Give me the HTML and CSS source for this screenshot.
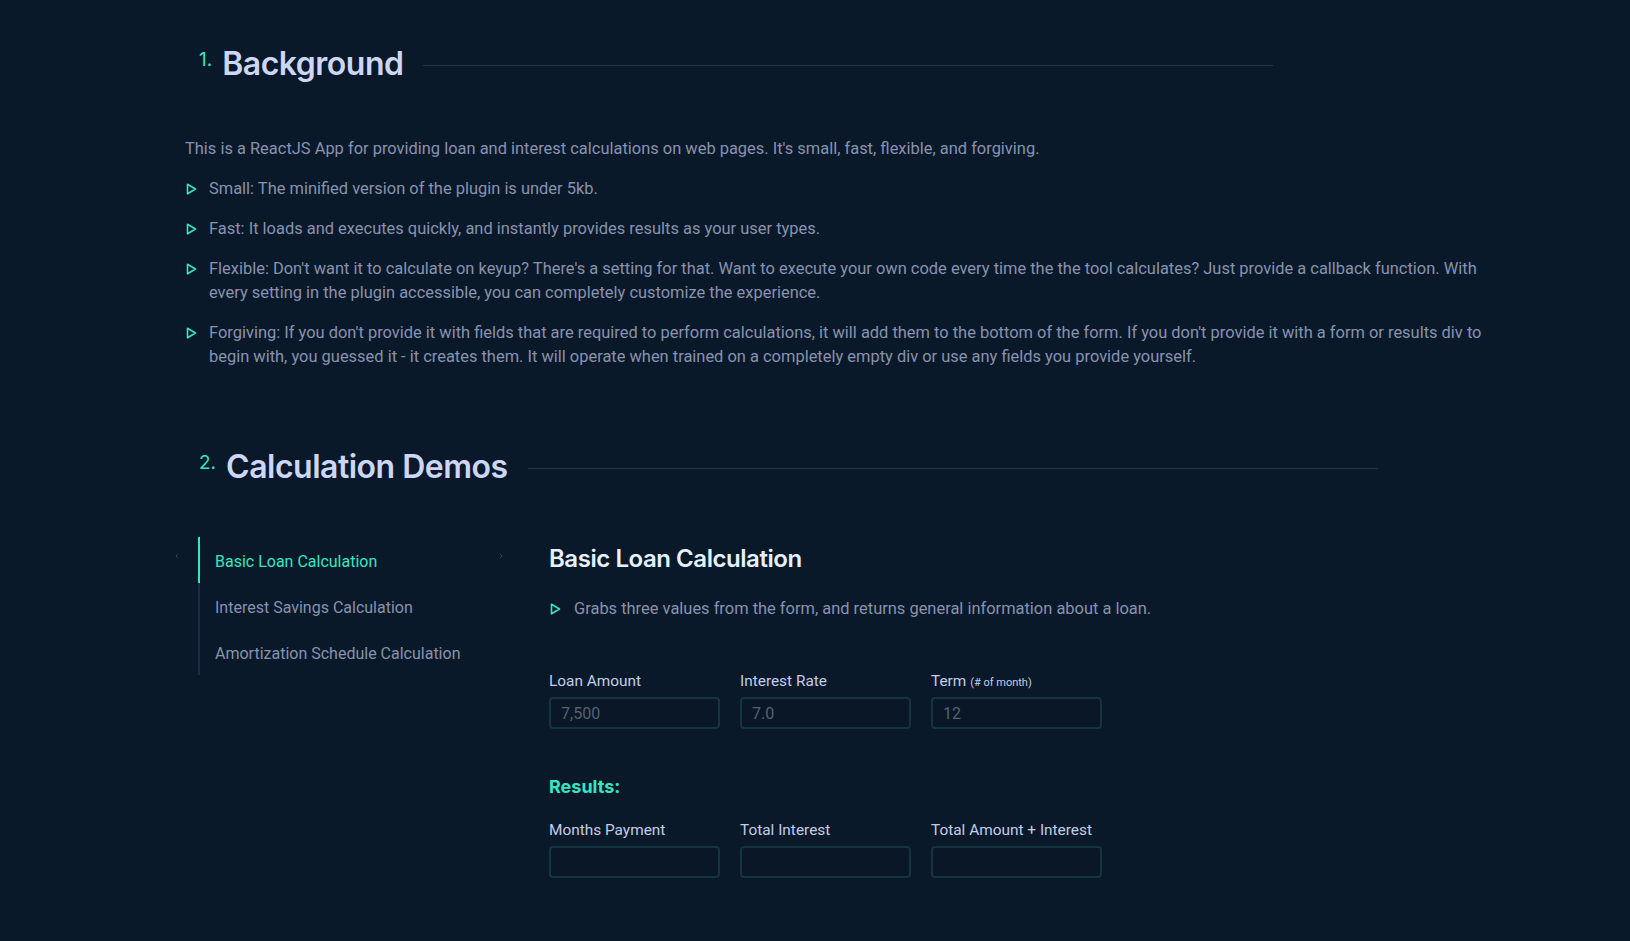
FILE: index.html
```html
<!DOCTYPE html>
<html lang="en">
<head>
<meta charset="utf-8">
<title>Loan Calculator</title>
<link rel="stylesheet" href="styles.css">
</head>
<body>
<main class="page">
  <section class="section">
    <h2 class="numbered-heading"><span class="num">1.</span><span class="title">Background</span></h2>
    <div class="about">
      <p class="lead">This is a ReactJS App for providing loan and interest calculations on web pages. It's small, fast, flexible, and forgiving.</p>
      <ul class="tri-list">
        <li><svg class="tri" width="11" height="12" viewBox="0 0 11 12"><path d="M1.5 1.2 L9.5 6 L1.5 10.8 Z" fill="none" stroke="currentColor" stroke-width="1.6" stroke-linejoin="round"/></svg><span>Small: The minified version of the plugin is under 5kb.</span></li>
        <li><svg class="tri" width="11" height="12" viewBox="0 0 11 12"><path d="M1.5 1.2 L9.5 6 L1.5 10.8 Z" fill="none" stroke="currentColor" stroke-width="1.6" stroke-linejoin="round"/></svg><span>Fast: It loads and executes quickly, and instantly provides results as your user types.</span></li>
        <li><svg class="tri" width="11" height="12" viewBox="0 0 11 12"><path d="M1.5 1.2 L9.5 6 L1.5 10.8 Z" fill="none" stroke="currentColor" stroke-width="1.6" stroke-linejoin="round"/></svg><span>Flexible: Don't want it to calculate on keyup? There's a setting for that. Want to execute your own code every time the the tool calculates? Just provide a callback function. With every setting in the plugin accessible, you can completely customize the experience.</span></li>
        <li><svg class="tri" width="11" height="12" viewBox="0 0 11 12"><path d="M1.5 1.2 L9.5 6 L1.5 10.8 Z" fill="none" stroke="currentColor" stroke-width="1.6" stroke-linejoin="round"/></svg><span>Forgiving: If you don't provide it with fields that are required to perform calculations, it will add them to the bottom of the form. If you don't provide it with a form or results div to begin with, you guessed it - it creates them. It will operate when trained on a completely empty div or use any fields you provide yourself.</span></li>
      </ul>
    </div>
  </section>

  <section class="section section-demos">
    <h2 class="numbered-heading"><span class="num">2.</span><span class="title">Calculation Demos</span></h2>
    <div class="demos">
      <div class="tabs-wrap">
        <span class="scroll-btn"><svg width="4" height="6" viewBox="0 0 4 6"><path d="M3 0.8 L1 3 L3 5.2" fill="none" stroke="currentColor" stroke-width="1"/></svg></span>
        <div class="tab-list">
          <div class="tab active">Basic Loan Calculation</div>
          <div class="tab">Interest Savings Calculation</div>
          <div class="tab">Amortization Schedule Calculation</div>
        </div>
        <span class="scroll-btn"><svg width="4" height="6" viewBox="0 0 4 6"><path d="M1 0.8 L3 3 L1 5.2" fill="none" stroke="currentColor" stroke-width="1"/></svg></span>
      </div>
      <div class="panel">
        <h3 class="panel-title">Basic Loan Calculation</h3>
        <ul class="tri-list panel-list">
          <li><svg class="tri" width="11" height="12" viewBox="0 0 11 12"><path d="M1.5 1.2 L9.5 6 L1.5 10.8 Z" fill="none" stroke="currentColor" stroke-width="1.6" stroke-linejoin="round"/></svg><span>Grabs three values from the form, and returns general information about a loan.</span></li>
        </ul>
        <form class="calc-form">
          <div class="field-row">
            <label class="field"><span class="label">Loan Amount</span><input class="input" type="text" placeholder="7,500"></label>
            <label class="field"><span class="label">Interest Rate</span><input class="input" type="text" placeholder="7.0"></label>
            <label class="field"><span class="label">Term <small class="hint">(# of month)</small></span><input class="input" type="text" placeholder="12"></label>
          </div>
          <h4 class="results-title">Results:</h4>
          <div class="field-row">
            <label class="field"><span class="label">Months Payment</span><input class="input" type="text"></label>
            <label class="field"><span class="label">Total Interest</span><input class="input" type="text"></label>
            <label class="field"><span class="label">Total Amount + Interest</span><input class="input" type="text"></label>
          </div>
        </form>
      </div>
    </div>
  </section>
</main>
</body>
</html>
```

FILE: styles.css
```css
* { box-sizing: border-box; }

html, body {
  margin: 0;
  padding: 0;
  background: #0a1929;
}

body {
  font-family: Roboto, "Noto Sans", sans-serif;
  color: #8892b0;
  font-size: 16.45px;
  line-height: 24px;
}

.page {
  padding: 46px 0 0 185px;
  width: 1497px;
}

.numbered-heading {
  display: flex;
  align-items: flex-start;
  margin: 0;
  padding-left: 14px;
  font-family: Inter, "Noto Sans", sans-serif;
  font-weight: 600;
  font-size: 32px;
  line-height: 35px;
  letter-spacing: -0.5px;
  color: #ccd6f6;
  white-space: nowrap;
}

.numbered-heading .num {
  font-family: Inter, "Noto Sans", sans-serif;
  font-weight: 400;
  font-size: 19px;
  line-height: 19px;
  letter-spacing: 0;
  color: #34e6c4;
  margin-top: 4px;
  margin-right: 10px;
}

.numbered-heading::after {
  content: "";
  display: block;
  width: 850px;
  height: 1px;
  margin-left: 20px;
  margin-top: 19px;
  background: #233554;
}

.about {
  margin-top: 56px;
}

.lead {
  margin: 0 0 16px;
}

.tri-list {
  list-style: none;
  margin: 0;
  padding: 0;
}

.tri-list li {
  display: flex;
  align-items: flex-start;
  margin-bottom: 16px;
}

.tri-list li:last-child {
  margin-bottom: 0;
}

.tri {
  flex-shrink: 0;
  color: #34e6c4;
  margin: 6px 12px 0 1px;
}

.section-demos {
  margin-top: 80px;
}

.demos {
  display: flex;
  align-items: flex-start;
  margin-top: 53px;
  margin-left: -15px;
}

.tabs-wrap {
  display: flex;
  align-items: flex-start;
  width: 379px;
  flex-shrink: 0;
}

.scroll-btn {
  display: flex;
  justify-content: center;
  width: 14px;
  margin-top: 16px;
  color: #2c4a5a;
}

.tab-list {
  width: 296px;
  margin-left: 14px;
  border-left: 2px solid #1d2d45;
}

.tab {
  height: 46px;
  padding: 4px 0 0 15px;
  display: flex;
  align-items: center;
  color: #8892b0;
  font-size: 16px;
  white-space: nowrap;
}

.tab.active {
  color: #34e6c4;
  margin-left: -2px;
  border-left: 2px solid #34e6c4;
  padding-left: 15px;
}

.panel {
  flex: 1;
}

.panel-title {
  margin: 7px 0 0;
  font-family: Inter, "Noto Sans", sans-serif;
  font-weight: 600;
  font-size: 24px;
  line-height: 30px;
  letter-spacing: -0.45px;
  color: #e6f1ff;
}

.panel-list {
  margin-top: 23px;
}

.tri-list.panel-list .tri {
  margin-right: 13px;
}

.calc-form {
  margin-top: 50px;
}

.field-row {
  display: flex;
  gap: 20px;
}

.field {
  display: flex;
  flex-direction: column;
  width: 171px;
}

.label {
  display: block;
  height: 20px;
  font-size: 15.4px;
  line-height: 20px;
  color: #c3cde9;
  margin-bottom: 6px;
  white-space: nowrap;
}

.hint {
  font-size: 11px;
  line-height: 1;
}

.input {
  width: 171px;
  height: 32px;
  border: 2px solid #14343f;
  border-radius: 4px;
  background: #091727;
  padding: 0 10px;
  font-family: Roboto, "Noto Sans", sans-serif;
  font-size: 16px;
  color: #8892b0;
  outline: none;
}

.input::placeholder {
  color: #566174;
}

.results-title {
  margin: 46px 0 21px;
  font-family: Inter, "Noto Sans", sans-serif;
  font-weight: 700;
  font-size: 18px;
  line-height: 24px;
  color: #34e6c4;
}
```
